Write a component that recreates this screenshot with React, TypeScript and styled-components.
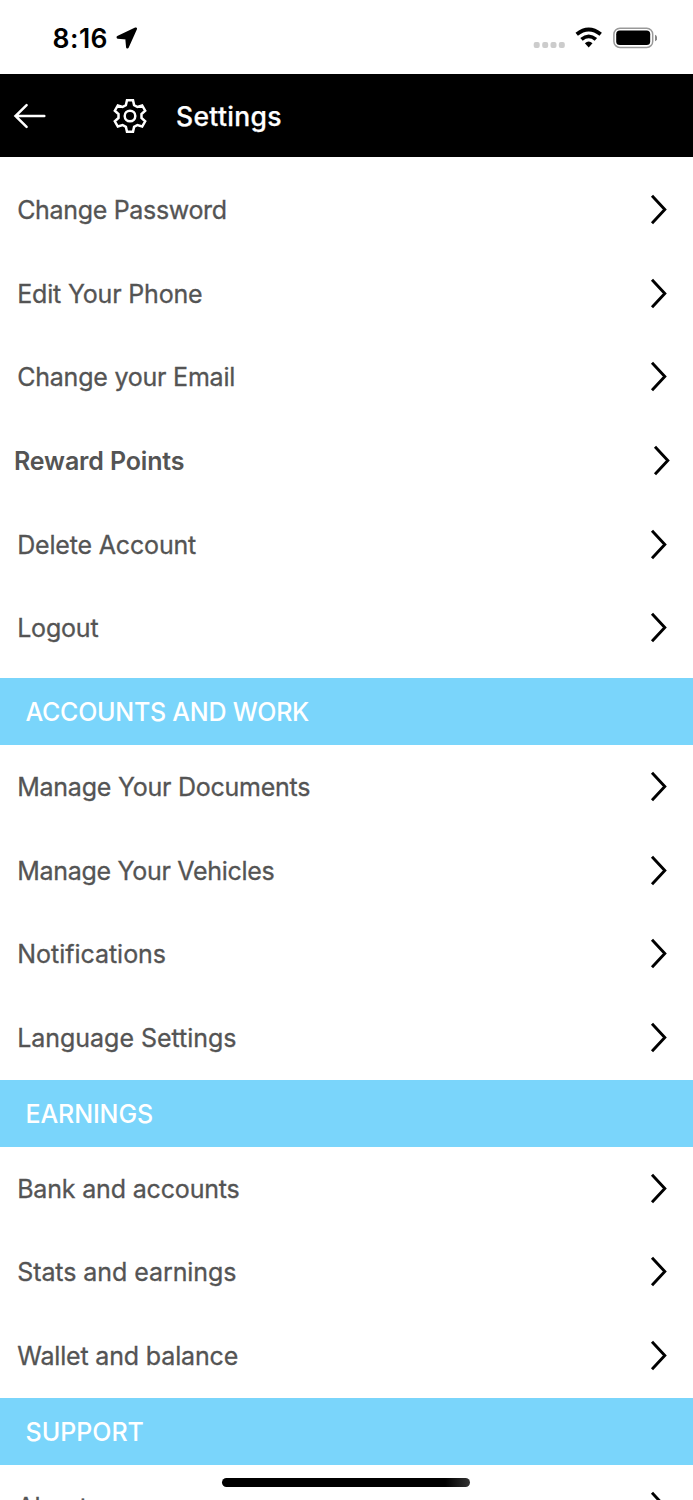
import React from "react";
import styled, { createGlobalStyle } from "styled-components";

const GlobalStyle = createGlobalStyle`
  html, body { margin: 0; background: #fff; }
  body { overflow: hidden; }
  * { box-sizing: border-box; }
`;

const Screen = styled.main`
  position: relative;
  width: 100%;
  height: 1500px;
  overflow: hidden;
  background: #fff;
  font-family: Inter, "Liberation Sans", sans-serif;
`;

const StatusBar = styled.div`
  display: flex;
  align-items: center;
  justify-content: space-between;
  height: 73.7px;
  padding: 2px 36px 0 52.5px;
`;

const Clock = styled.div`
  display: flex;
  align-items: center;
  gap: 7.5px;
  height: 72px;
  font-size: 26.5px;
  font-weight: 600;
  letter-spacing: 0.5px;
  color: #000;
`;

const Indicators = styled.div`
  display: flex;
  align-items: center;
`;

const Header = styled.header`
  display: flex;
  align-items: center;
  height: 83.7px;
  padding-left: 13px;
  background: #000;
  color: #fff;
`;

const GearSlot = styled.span`
  display: flex;
  margin: 0 29px 0 66px;
`;

const Title = styled.h1`
  margin: 0;
  font-size: 26.5px;
  font-weight: 500;
  line-height: 32px;
  letter-spacing: 0.33px;
  -webkit-text-stroke: 0.25px currentColor;
`;

const List = styled.ul<{ $top?: number; $bottom?: number }>`
  margin: 0;
  padding: ${(p) => p.$top ?? 0}px 0 ${(p) => p.$bottom ?? 0}px;
  list-style: none;
`;

const Row = styled.li<{ $strong?: boolean; $tracking?: number }>`
  display: flex;
  align-items: center;
  justify-content: space-between;
  height: 83.7px;
  padding: ${(p) => (p.$strong ? "0.6px 22px 0 14px" : "0.6px 25px 0 17.2px")};
  font-size: 25px;
  font-weight: ${(p) => (p.$strong ? 600 : 400)};
  -webkit-text-stroke: ${(p) => (p.$strong ? 0 : 0.3)}px currentColor;
  letter-spacing: ${(p) => p.$tracking ?? 0}px;
  color: #545454;
`;

const Band = styled.h2<{ $tracking?: number }>`
  display: flex;
  align-items: center;
  height: 67px;
  margin: 0;
  padding: 1px 0 0 25.5px;
  background: #7ad5fb;
  color: #fff;
  font-size: 25px;
  font-weight: 500;
  letter-spacing: ${(p) => p.$tracking ?? 0}px;
`;

const HomeIndicator = styled.div`
  position: absolute;
  left: 222.4px;
  top: 1478px;
  width: 247.6px;
  height: 8.6px;
  border-radius: 5px;
  background: linear-gradient(90deg, #000 90%, #333 100%);
`;

type Item = { label: string; strong?: boolean; tracking?: number };
type Section = { title?: string; tracking?: number; top?: number; bottom?: number; items: Item[] };

const sections: Section[] = [
  {
    top: 10.4,
    bottom: 8,
    items: [
      { label: "Change Password", tracking: -0.33 },
      { label: "Edit Your Phone", tracking: -0.18 },
      { label: "Change your Email", tracking: -0.22 },
      { label: "Reward Points", strong: true, tracking: -0.15 },
      { label: "Delete Account", tracking: -0.17 },
      { label: "Logout", tracking: -0.2 },
    ],
  },
  {
    title: "ACCOUNTS AND WORK",
    tracking: -0.26,
    items: [
      { label: "Manage Your Documents", tracking: -0.24 },
      { label: "Manage Your Vehicles", tracking: -0.29 },
      { label: "Notifications", tracking: -0.02 },
      { label: "Language Settings", tracking: -0.03 },
    ],
  },
  {
    title: "EARNINGS",
    tracking: -0.12,
    items: [
      { label: "Bank and accounts", tracking: -0.17 },
      { label: "Stats and earnings", tracking: -0.07 },
      { label: "Wallet and balance", tracking: -0.16 },
    ],
  },
  { title: "SUPPORT", items: [{ label: "About" }] },
];

const toothPoints: [number, number][] = [
  [-4.1, -10.9],
  [-3, -15.8],
  [3, -15.8],
  [4.1, -10.9],
];

const gearOutline = [0, 60, 120, 180, 240, 300]
  .flatMap((deg) => {
    const a = (deg * Math.PI) / 180;
    return toothPoints.map(
      ([x, y]) =>
        `${(x * Math.cos(a) - y * Math.sin(a)).toFixed(2)},${(x * Math.sin(a) + y * Math.cos(a)).toFixed(2)}`
    );
  })
  .join(" ");

const Gear = () => (
  <svg width="34" height="36" viewBox="-17 -18 34 36" fill="none" stroke="#fff" strokeWidth="2.5" strokeLinejoin="miter">
    <polygon points={gearOutline} />
    <circle r="5.3" />
  </svg>
);

const BackArrow = () => (
  <svg width="34" height="26" viewBox="0 0 34 26" fill="none" stroke="#fff" strokeWidth="2.5" strokeLinecap="round">
    <path d="M31.3 13H2.5M13.6 2.2L2.5 13L13.6 23.8" />
  </svg>
);

const Chevron = () => (
  <svg width="18" height="32" viewBox="0 0 18 32" fill="none" stroke="#000" strokeWidth="2.9">
    <path d="M2 1.8L14.8 15.5L2 29.2" />
  </svg>
);

const LocationArrow = () => (
  <svg width="22" height="22" viewBox="0 0 22 22">
    <path
      d="M19.7 1.8L1.9 10.3L10.6 11.1L11.4 20.1Z"
      fill="#000"
      stroke="#000"
      strokeWidth="2.7"
      strokeLinejoin="round"
    />
  </svg>
);

const StatusIcons = () => (
  <svg width="126" height="26" viewBox="531 25 126 26" fill="none">
    <g fill="#ccc">
      <rect x="533.7" y="42" width="6" height="6" rx="2" />
      <rect x="542.2" y="42" width="6" height="6" rx="2" />
      <rect x="550.5" y="42" width="6" height="6" rx="2" />
      <rect x="558.8" y="42" width="6" height="6" rx="2" />
    </g>
    <g stroke="#000" strokeWidth="3.8">
      <path d="M576.7 34.3Q588.7 24.6 600.7 34.3" />
      <path d="M581.5 39.4Q588.7 33.4 595.9 39.4" />
    </g>
    <path d="M584.9 43.2Q588.7 40 592.5 43.2L588.7 47.4Z" fill="#000" />
    <rect x="613.9" y="28.2" width="38.8" height="19.2" rx="6" stroke="#999" strokeWidth="1.5" />
    <rect x="616.2" y="30.6" width="34" height="14.5" rx="3.6" fill="#000" />
    <path d="M655 34.8Q657.2 35.6 657.2 38T655 41.2Z" fill="#888" />
  </svg>
);

export default function App() {
  return (
    <Screen>
      <GlobalStyle />
      <StatusBar>
        <Clock>
          8:16
          <LocationArrow />
        </Clock>
        <Indicators>
          <StatusIcons />
        </Indicators>
      </StatusBar>
      <Header>
        <BackArrow />
        <GearSlot>
          <Gear />
        </GearSlot>
        <Title>Settings</Title>
      </Header>
      {sections.map((section, i) => (
        <section key={i}>
          {section.title && <Band $tracking={section.tracking}>{section.title}</Band>}
          <List $top={section.top} $bottom={section.bottom}>
            {section.items.map((item) => (
              <Row key={item.label} $strong={item.strong} $tracking={item.tracking}>
                <span>{item.label}</span>
                <Chevron />
              </Row>
            ))}
          </List>
        </section>
      ))}
      <HomeIndicator />
    </Screen>
  );
}
